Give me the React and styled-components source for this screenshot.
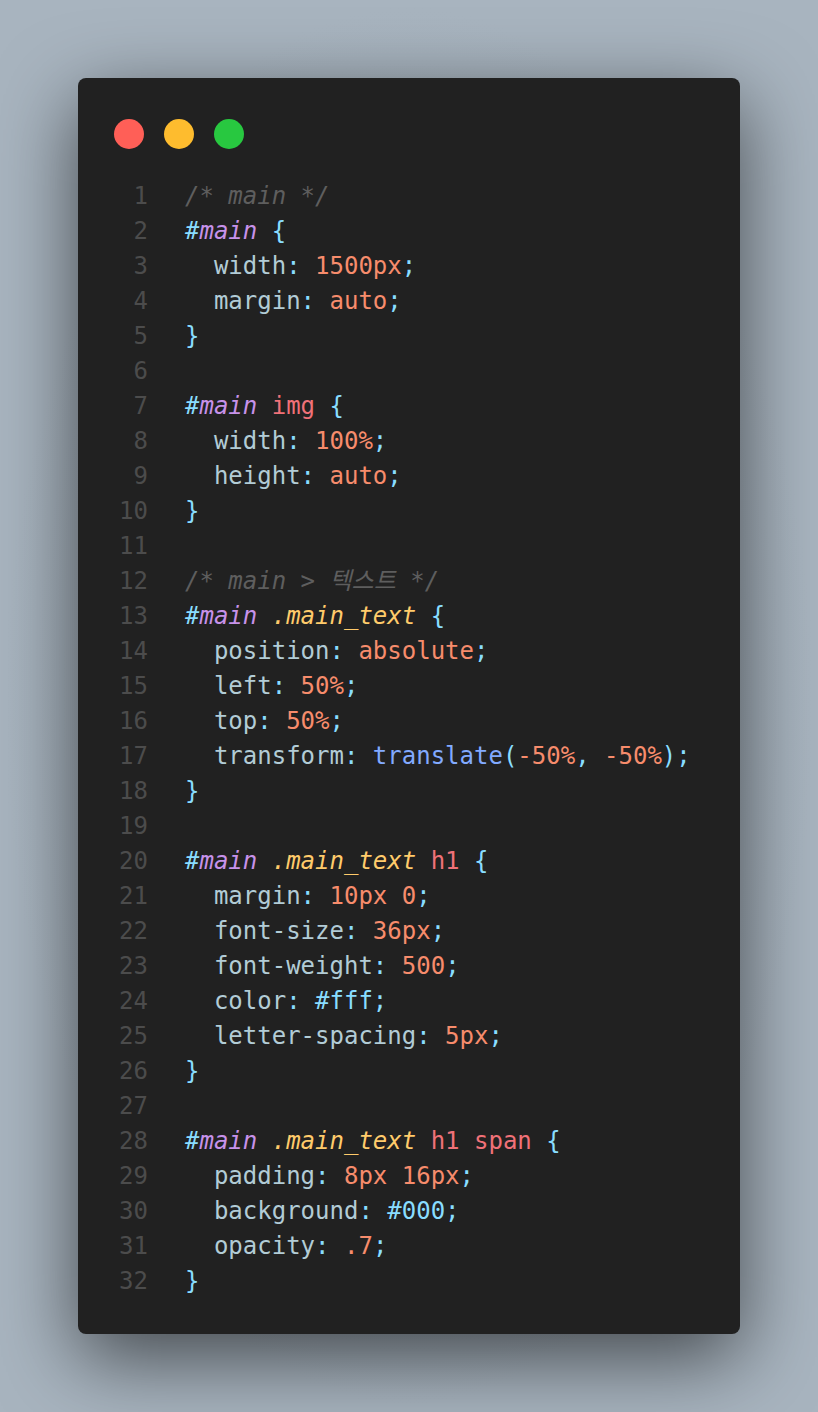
import React from "react";
import styled, { createGlobalStyle } from "styled-components";

const GlobalStyle = createGlobalStyle`
  html, body {
    margin: 0;
    padding: 0;
  }
  body {
    background: #a8b4bf;
    min-height: 1412px;
  }
`;

const Page = styled.div`
  box-sizing: border-box;
  width: 818px;
  min-height: 1412px;
  padding: 78px 78px;
  background: radial-gradient(ellipse at 50% 50%, #9aa6b1 0%, #a8b4bf 70%);
`;

const Window = styled.div`
  box-sizing: border-box;
  width: 662px;
  height: 1256px;
  padding: 41px 36px 36px;
  background: #212121;
  border-radius: 8px;
  box-shadow: 0 24px 80px rgba(0, 0, 0, 0.6);
`;

const Controls = styled.div`
  display: flex;
  gap: 20px;
  height: 30px;
  margin-bottom: 30px;
`;

const Dot = styled.span`
  width: 30px;
  height: 30px;
  border-radius: 50%;
  background: ${(p) => p.$color};
`;

const Code = styled.div`
  font-family: "DejaVu Sans Mono", "Noto Sans CJK KR", monospace;
  font-size: 24px;
  line-height: 35px;
  white-space: pre;
`;

const Row = styled.div`
  display: flex;
  height: 35px;
`;

const LineNo = styled.span`
  width: 34px;
  margin-right: 37px;
  text-align: right;
  color: #4c4c4c;
`;

const colors = {
  c: "#5e5e5e",
  h: "#89ddff",
  id: "#c792ea",
  cls: "#ffcb6b",
  tag: "#f07178",
  p: "#89ddff",
  prop: "#b2ccd6",
  num: "#f78c6c",
  fn: "#82aaff",
  t: "#b2ccd6",
};

const italic = { c: true, id: true, cls: true, h: true };

const Tok = styled.span`
  color: ${(p) => colors[p.$k]};
  font-style: ${(p) => (italic[p.$k] ? "italic" : "normal")};
`;

const sel = (...rest) => [["h", "#"], ["id", "main"], ...rest];
const decl = (prop, ...val) => [["t", "  "], ["prop", prop], ["p", ":"], ["t", " "], ...val, ["p", ";"]];
const close = [["p", "}"]];

const lines = [
  [["c", "/* main */"]],
  sel(["t", " "], ["p", "{"]),
  decl("width", ["num", "1500px"]),
  decl("margin", ["num", "auto"]),
  close,
  [],
  sel(["t", " "], ["tag", "img"], ["t", " "], ["p", "{"]),
  decl("width", ["num", "100%"]),
  decl("height", ["num", "auto"]),
  close,
  [],
  [["c", "/* main > 텍스트 */"]],
  sel(["t", " "], ["cls", ".main_text"], ["t", " "], ["p", "{"]),
  decl("position", ["num", "absolute"]),
  decl("left", ["num", "50%"]),
  decl("top", ["num", "50%"]),
  decl("transform", ["fn", "translate"], ["p", "("], ["num", "-50%"], ["p", ","], ["t", " "], ["num", "-50%"], ["p", ")"]),
  close,
  [],
  sel(["t", " "], ["cls", ".main_text"], ["t", " "], ["tag", "h1"], ["t", " "], ["p", "{"]),
  decl("margin", ["num", "10px 0"]),
  decl("font-size", ["num", "36px"]),
  decl("font-weight", ["num", "500"]),
  decl("color", ["p", "#fff"]),
  decl("letter-spacing", ["num", "5px"]),
  close,
  [],
  sel(["t", " "], ["cls", ".main_text"], ["t", " "], ["tag", "h1"], ["t", " "], ["tag", "span"], ["t", " "], ["p", "{"]),
  decl("padding", ["num", "8px 16px"]),
  decl("background", ["p", "#000"]),
  decl("opacity", ["num", ".7"]),
  close,
];

export default function App() {
  return (
    <>
      <GlobalStyle />
      <Page>
        <Window>
          <Controls>
            <Dot $color="#ff5f57" />
            <Dot $color="#febc2e" />
            <Dot $color="#28c840" />
          </Controls>
          <Code>
            {lines.map((toks, i) => (
              <Row key={i}>
                <LineNo>{i + 1}</LineNo>
                <span>
                  {toks.map(([k, text], j) => (
                    <Tok key={j} $k={k}>{text}</Tok>
                  ))}
                </span>
              </Row>
            ))}
          </Code>
        </Window>
      </Page>
    </>
  );
}
